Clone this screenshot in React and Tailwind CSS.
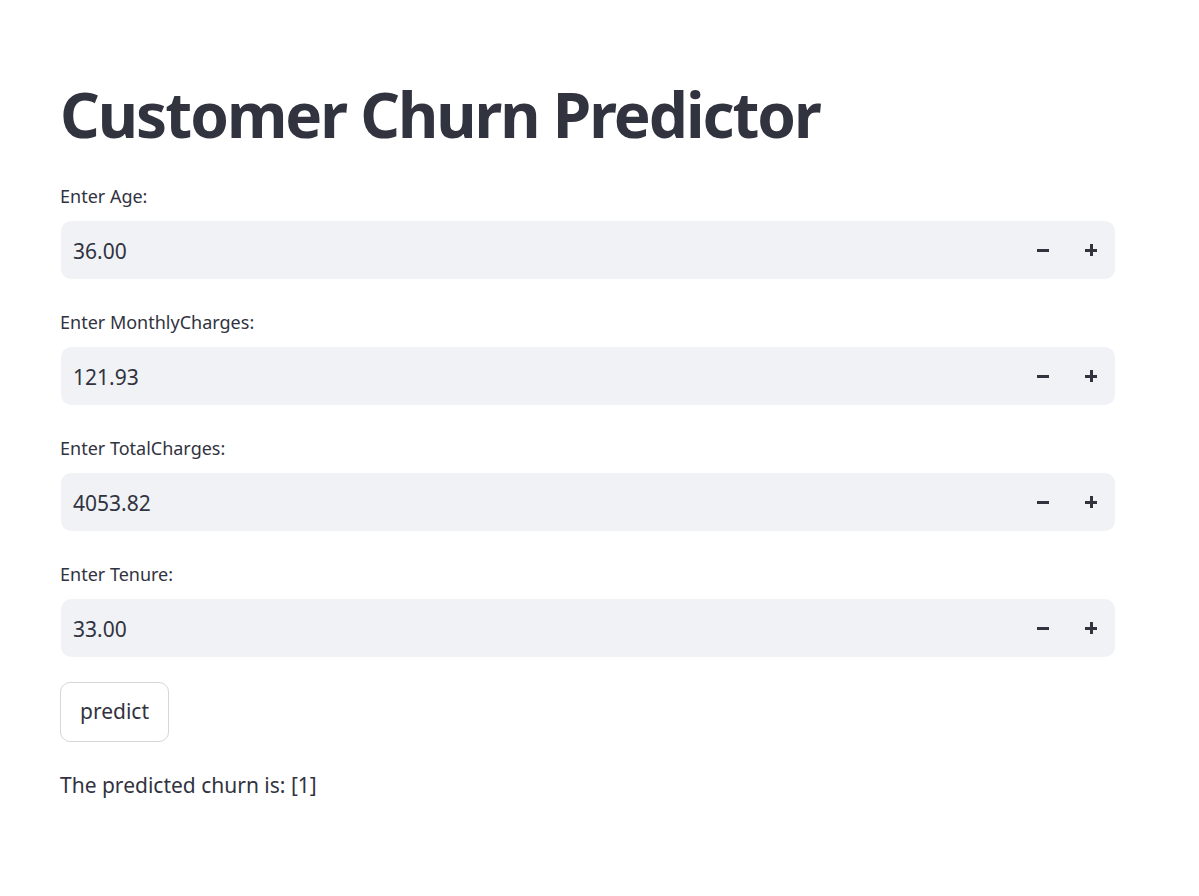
import React from 'react';

const fields = [
  { label: 'Enter Age:', value: '36.00' },
  { label: 'Enter MonthlyCharges:', value: '121.93' },
  { label: 'Enter TotalCharges:', value: '4053.82' },
  { label: 'Enter Tenure:', value: '33.00' },
];

function Minus() {
  return <span className="block h-[3px] w-[12px] bg-[#31333f]" />;
}

function Plus() {
  return (
    <span className="relative block h-[12px] w-[12px]">
      <span className="absolute left-0 top-[4.5px] h-[3px] w-[12px] bg-[#31333f]" />
      <span className="absolute left-[4.5px] top-0 h-[12px] w-[3px] bg-[#31333f]" />
    </span>
  );
}

function NumberField({ label, value }) {
  return (
    <div className="flex flex-col">
      <label className="h-[38px] text-[18px] leading-[20px] pt-[3px]">{label}</label>
      <div className="ml-px flex h-[58px] w-[1054px] items-center rounded-[10px] bg-[#f0f2f6]">
        <span className="flex-1 pl-[12px] pt-[3px] text-[21px]">{value}</span>
        <div className="flex h-full items-center">
          <button className="flex h-full w-[48px] items-center justify-center">
            <Minus />
          </button>
          <button className="flex h-full w-[48px] items-center justify-center">
            <Plus />
          </button>
        </div>
      </div>
    </div>
  );
}

export default function App() {
  return (
    <div className="min-h-[896px] bg-white text-[#31333f]" style={{ fontFamily: '"Noto Sans", sans-serif' }}>
      <div className="px-[60px] pt-[74px]">
        <h1 className="text-[62px] font-bold leading-[80px] tracking-[-2px]">Customer Churn Predictor</h1>
        <div className="mt-[29px] flex flex-col gap-[30px]">
          {fields.map((f) => (
            <NumberField key={f.label} label={f.label} value={f.value} />
          ))}
        </div>
        <button className="mt-[25px] h-[60px] w-[109px] rounded-[10px] border border-[#d5d6d9] text-[21px]">
          predict
        </button>
        <p className="mt-[28px] text-[21px]">The predicted churn is: [1]</p>
      </div>
    </div>
  );
}
